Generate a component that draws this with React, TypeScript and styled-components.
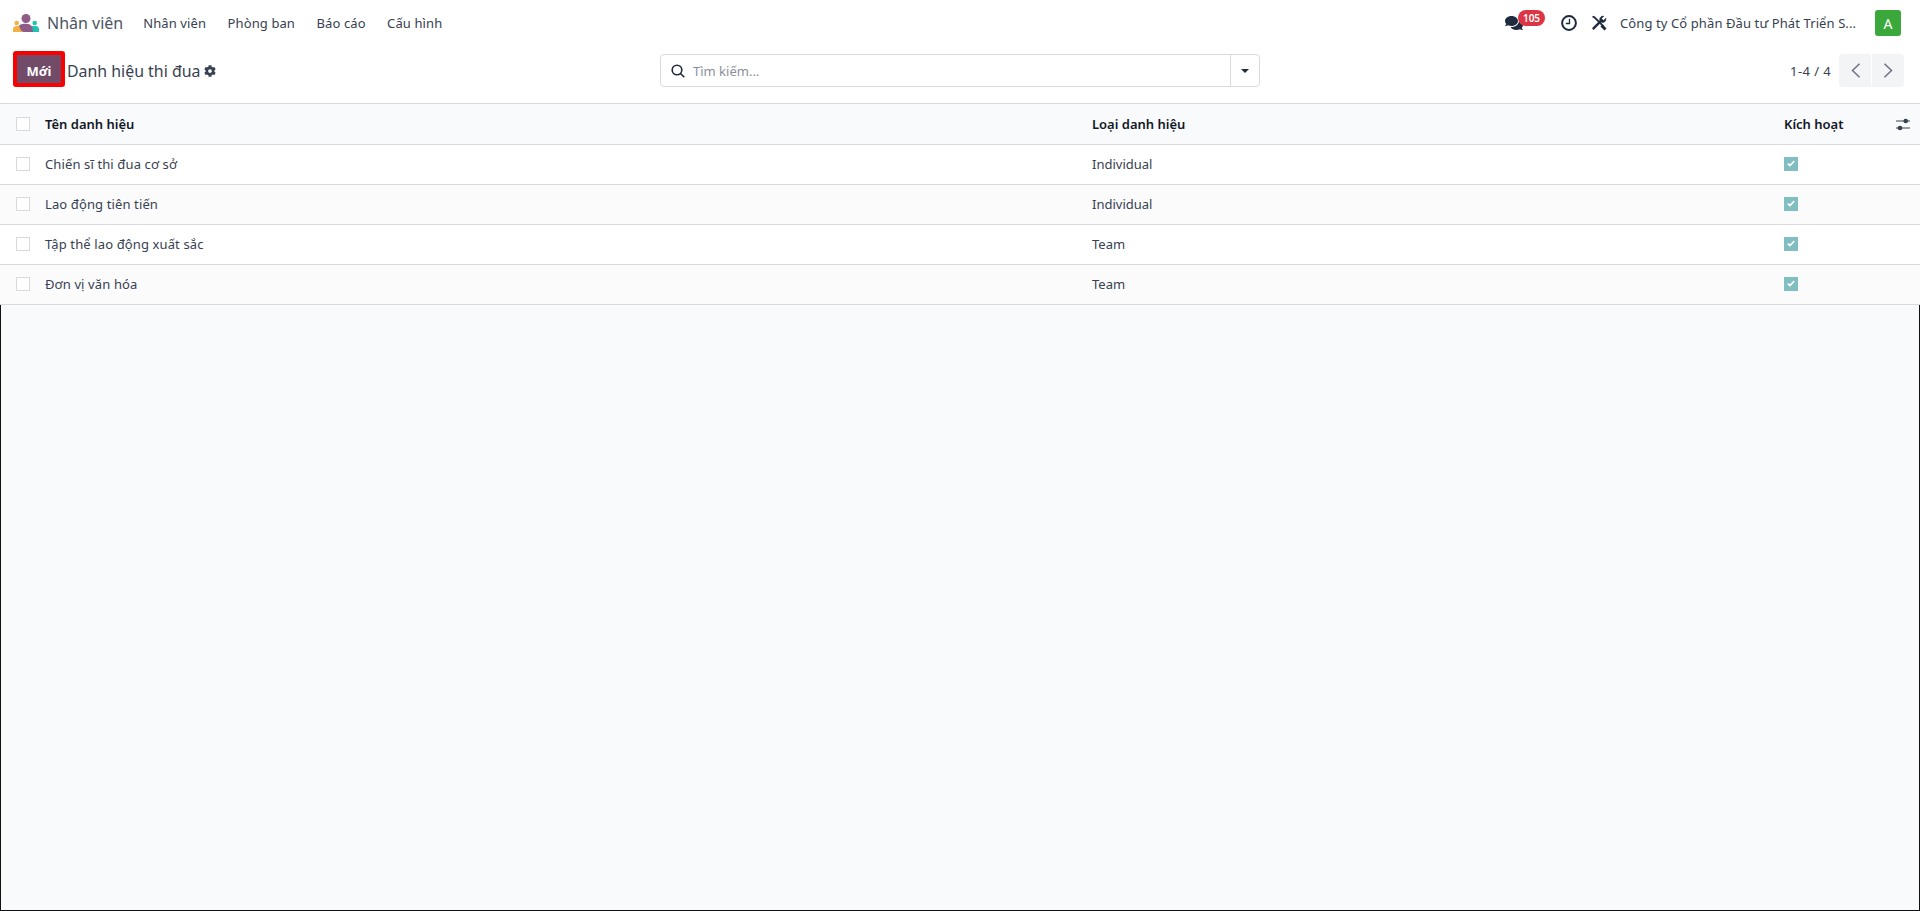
import styled, { createGlobalStyle } from 'styled-components';
import { FaCog, FaComments } from 'react-icons/fa';

const GlobalStyle = createGlobalStyle`
  html, body { margin: 0; padding: 0; height: 100%; }
  body {
    background: #fff;
    color: #374151;
    font-family: "Noto Sans", "Liberation Sans", sans-serif;
    font-size: 13px;
    overflow: hidden;
  }
  #root { height: 100%; }
`;

const Page = styled.div`
  display: flex;
  flex-direction: column;
  height: 911px;
`;

const Navbar = styled.nav`
  display: flex;
  align-items: center;
  height: 46px;
  padding: 0 19px 0 13px;
  flex: none;
`;

const AppName = styled.span`
  margin-left: 8px;
  margin-right: 20px;
  font-size: 16px;
  color: #4b5563;
`;

const MenuItem = styled.span`
  margin-right: 21.5px;
  letter-spacing: 0.1px;
  color: #374151;
`;

const NavRight = styled.div`
  display: flex;
  align-items: center;
  margin-left: auto;
  color: #1f2937;
`;

const ChatIcon = styled.span`
  position: relative;
  display: flex;
  width: 56px;
  font-size: 18px;
  color: #1f2a3d;
`;

const Badge = styled.span`
  position: absolute;
  left: 13px;
  top: -4px;
  width: 27px;
  height: 16px;
  border-radius: 8px;
  background: #dc3545;
  color: #fff;
  font-size: 10px;
  font-weight: 600;
  line-height: 16px;
  text-align: center;
`;

const NavIcon = styled.span<{ $w: number }>`
  display: flex;
  width: ${(p) => p.$w}px;
`;

const Company = styled.span`
  width: 236px;
  margin-right: 19px;
  white-space: nowrap;
  letter-spacing: 0.1px;
  color: #374151;
`;

const Avatar = styled.span`
  display: flex;
  align-items: center;
  justify-content: center;
  width: 26px;
  height: 26px;
  border-radius: 3px;
  background: #3aa83a;
  color: #fff;
  font-size: 14px;
`;

const ControlPanel = styled.div`
  display: grid;
  grid-template-columns: 647px 600px 1fr;
  align-items: center;
  height: 57px;
  padding: 0 16px 8px 13px;
  box-sizing: border-box;
  flex: none;
`;

const Breadcrumb = styled.div`
  display: flex;
  align-items: center;
`;

const NewButton = styled.button`
  width: 52px;
  height: 36px;
  margin-bottom: 3px;
  padding: 3px 0 0;
  border: 4px solid #fa0000;
  border-radius: 3px;
  background: #714b67;
  color: #fff;
  font-family: inherit;
  font-size: 13px;
  font-weight: 700;
`;

const Title = styled.span`
  margin-left: 2px;
  margin-right: 4px;
  font-size: 15.9px;
  color: #374151;
`;

const CogIcon = styled(FaCog)`
  font-size: 12px;
  color: #374151;
`;

const SearchBox = styled.div`
  display: flex;
  align-items: center;
  height: 33px;
  box-sizing: border-box;
  border: 1px solid #d8dadd;
  border-radius: 4px;
`;

const SearchInput = styled.div`
  display: flex;
  align-items: center;
  flex: 1;
  height: 100%;
  padding-left: 10px;
  gap: 8px;
  color: #8a8f98;
`;

const SearchToggle = styled.div`
  display: flex;
  align-items: center;
  justify-content: center;
  width: 28px;
  height: 100%;
  border-left: 1px solid #d8dadd;
`;

const Caret = styled.span`
  width: 0;
  height: 0;
  border-left: 4.5px solid transparent;
  border-right: 4.5px solid transparent;
  border-top: 4.5px solid #1f2937;
`;

const Pager = styled.div`
  display: flex;
  align-items: center;
  justify-content: flex-end;
  gap: 8px;
  letter-spacing: 0.4px;
`;

const PagerButtons = styled.div`
  display: flex;
  gap: 1px;
`;

const PagerButton = styled.span<{ $side: 'left' | 'right' }>`
  display: flex;
  align-items: center;
  justify-content: center;
  width: 32px;
  height: 33px;
  background: #f3f4f6;
  border-radius: ${(p) => (p.$side === 'left' ? '4px 0 0 4px' : '0 4px 4px 0')};
`;

const Table = styled.div`
  flex: none;
  border-top: 1px solid #d8dadd;
`;

const Row = styled.div<{ $head?: boolean; $stripe?: boolean }>`
  display: grid;
  grid-template-columns: 29px 1047px 692px 1fr;
  align-items: center;
  height: ${(p) => (p.$head ? 41 : 40)}px;
  padding: ${(p) => (p.$head ? '0 0 0 16px' : '0 0 2px 16px')};
  box-sizing: border-box;
  border-bottom: 1px solid #d8dadd;
  background: ${(p) => (p.$head ? '#f9fafb' : p.$stripe ? '#fbfbfc' : '#fff')};
  font-weight: ${(p) => (p.$head ? 600 : 400)};
  color: ${(p) => (p.$head ? '#111827' : '#374151')};
`;

const NameCell = styled.span<{ $head?: boolean }>`
  letter-spacing: ${(p) => (p.$head ? 0 : 0.12)}px;
`;

const Box = styled.span`
  display: block;
  width: 14px;
  height: 14px;
  box-sizing: border-box;
  border: 1px solid #d8dadd;
  background: #fff;
`;

const Checked = styled.span`
  display: flex;
  align-items: center;
  justify-content: center;
  width: 14px;
  height: 14px;
  background: #80bec1;
`;

const HeadLast = styled.span`
  display: flex;
  align-items: center;
  justify-content: space-between;
  padding-right: 10px;
`;

const Content = styled.div`
  flex: 1;
  box-sizing: border-box;
  border: 1px solid #111;
  border-top: 0;
  background: #f9fafb;
`;

const rows = [
  { name: 'Chiến sĩ thi đua cơ sở', type: 'Individual' },
  { name: 'Lao động tiên tiến', type: 'Individual' },
  { name: 'Tập thể lao động xuất sắc', type: 'Team' },
  { name: 'Đơn vị văn hóa', type: 'Team' },
];

const Logo = () => (
  <svg width="26" height="18" viewBox="0 0 26 18">
    <circle cx="3.700" cy="9" r="2.300" fill="#f2b143" />
    <path d="M0 18v-3a3.500 3.500 0 0 1 3.500-3H10v6z" fill="#f2b143" />
    <circle cx="21.700" cy="9" r="2.300" fill="#1fc4b1" />
    <path d="M16 18v-6h6.500a3.500 3.500 0 0 1 3.500 3v3z" fill="#1fc4b1" />
    <circle cx="13" cy="4.500" r="4.500" fill="#8f5c88" />
    <path d="M6 11.500c2-1.500 4.500-1.700 7-1.700 3.500 0 5.500 1.500 6.500 4l.5 4.200h-9c-2.500 0-4-3.500-5-6.500z" fill="#8f5c88" />
  </svg>
);

const SearchIcon = () => (
  <svg width="14" height="14" viewBox="0 0 14 14" fill="none" stroke="#1f2a3d" strokeWidth="1.600">
    <circle cx="6" cy="6" r="4.800" />
    <path d="M9.500 9.500l3.800 3.800" />
  </svg>
);

const ClockIcon = () => (
  <svg width="16" height="16" viewBox="0 0 16 16" fill="none" stroke="#1f2a3d">
    <circle cx="8" cy="8" r="6.900" strokeWidth="2" />
    <path d="M8.500 3.800v4.700H4.800" strokeWidth="1.300" />
  </svg>
);

const ToolsIcon = () => (
  <svg width="16" height="16" viewBox="0 0 16 16" fill="none" stroke="#1f2a3d">
    <path d="M1.500 1.500l2 .8 9.500 9.500" strokeWidth="1.800" />
    <path d="M10.500 10.500l4 4" strokeWidth="3" />
    <path d="M1.800 14.200l8-8" strokeWidth="2.400" />
    <path d="M14.800 3.200l-2.300 2.300-2-2 2.300-2.300a3.400 3.400 0 0 0-4 4.300l2 2a3.400 3.400 0 0 0 4-4.300z" fill="#1f2a3d" strokeWidth="0.500" />
  </svg>
);

const ChevronIcon = ({ points }: { points: string }) => (
  <svg width="11" height="15" viewBox="0 0 11 15" fill="none" stroke="#6b7280" strokeWidth="1.500">
    <polyline points={points} />
  </svg>
);

const CheckMark = () => (
  <svg width="8" height="7" viewBox="0 0 8 7" fill="none" stroke="#fff" strokeWidth="1.800">
    <path d="M.8 3.600l2.200 2 4.200-4.600" />
  </svg>
);

const AdjustIcon = () => (
  <svg width="14" height="13" viewBox="0 0 14 13" fill="#374151" stroke="#374151">
    <path d="M0 3h14M0 10h14" strokeWidth="1" />
    <circle cx="9.700" cy="3" r="2.300" stroke="none" />
    <circle cx="4" cy="10" r="2.300" stroke="none" />
  </svg>
);

const App = (): JSX.Element => (
  <Page>
    <GlobalStyle />
    <Navbar>
      <Logo />
      <AppName>Nhân viên</AppName>
      <MenuItem>Nhân viên</MenuItem>
      <MenuItem>Phòng ban</MenuItem>
      <MenuItem>Báo cáo</MenuItem>
      <MenuItem>Cấu hình</MenuItem>
      <NavRight>
        <ChatIcon>
          <FaComments />
          <Badge>105</Badge>
        </ChatIcon>
        <NavIcon $w={30}>
          <ClockIcon />
        </NavIcon>
        <NavIcon $w={29}>
          <ToolsIcon />
        </NavIcon>
        <Company>Công ty Cổ phần Đầu tư Phát Triển S...</Company>
        <Avatar>A</Avatar>
      </NavRight>
    </Navbar>
    <ControlPanel>
      <Breadcrumb>
        <NewButton>Mới</NewButton>
        <Title>Danh hiệu thi đua</Title>
        <CogIcon />
      </Breadcrumb>
      <SearchBox>
        <SearchInput>
          <SearchIcon />
          Tìm kiếm...
        </SearchInput>
        <SearchToggle>
          <Caret />
        </SearchToggle>
      </SearchBox>
      <Pager>
        1-4 / 4
        <PagerButtons>
          <PagerButton $side="left">
            <ChevronIcon points="9.500,.8 2.500,7.500 9.500,14.200" />
          </PagerButton>
          <PagerButton $side="right">
            <ChevronIcon points="1.500,.8 8.500,7.500 1.500,14.200" />
          </PagerButton>
        </PagerButtons>
      </Pager>
    </ControlPanel>
    <Table>
      <Row $head>
        <Box />
        <NameCell $head>Tên danh hiệu</NameCell>
        <span>Loại danh hiệu</span>
        <HeadLast>
          Kích hoạt
          <AdjustIcon />
        </HeadLast>
      </Row>
      {rows.map((row, i) => (
        <Row key={row.name} $stripe={i % 2 === 1}>
          <Box />
          <NameCell>{row.name}</NameCell>
          <span>{row.type}</span>
          <Checked>
            <CheckMark />
          </Checked>
        </Row>
      ))}
    </Table>
    <Content />
  </Page>
);

export default App;
